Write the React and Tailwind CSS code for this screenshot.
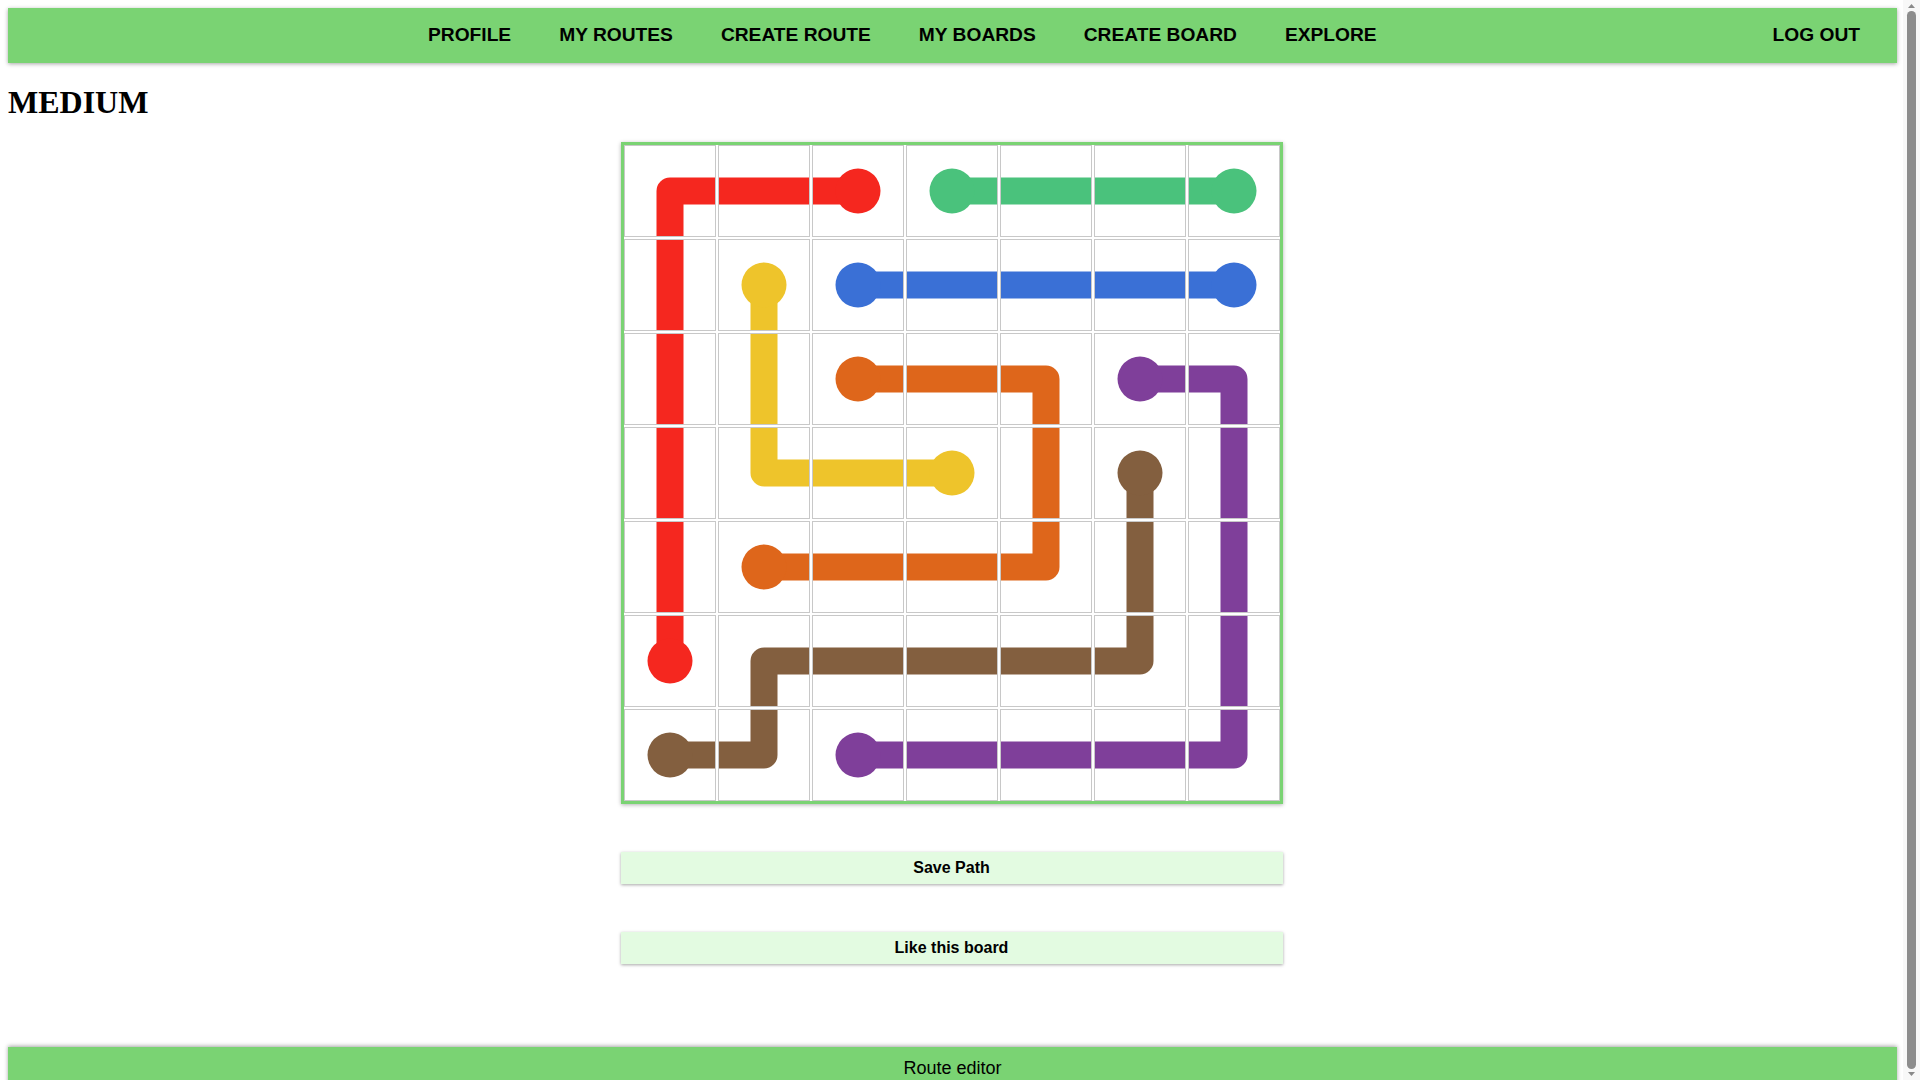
import { useState } from "react";

const COLORS = {
  r: "#f5271f",
  g: "#4ac27c",
  b: "#3a70d6",
  y: "#eec42b",
  o: "#de661b",
  p: "#7f3f9a",
  n: "#835f3f",
};

// each cell: [color, connections, isEndpoint]
// connections use U D L R
const BOARD = [
  [["r", "RD"], ["r", "LR"], ["r", "L", 1], ["g", "R", 1], ["g", "LR"], ["g", "LR"], ["g", "L", 1]],
  [["r", "UD"], ["y", "D", 1], ["b", "R", 1], ["b", "LR"], ["b", "LR"], ["b", "LR"], ["b", "L", 1]],
  [["r", "UD"], ["y", "UD"], ["o", "R", 1], ["o", "LR"], ["o", "LD"], ["p", "R", 1], ["p", "LD"]],
  [["r", "UD"], ["y", "UR"], ["y", "LR"], ["y", "L", 1], ["o", "UD"], ["n", "D", 1], ["p", "UD"]],
  [["r", "UD"], ["o", "R", 1], ["o", "LR"], ["o", "LR"], ["o", "UL"], ["n", "UD"], ["p", "UD"]],
  [["r", "U", 1], ["n", "RD"], ["n", "LR"], ["n", "LR"], ["n", "LR"], ["n", "LU"], ["p", "UD"]],
  [["n", "R", 1], ["n", "LU"], ["p", "R", 1], ["p", "LR"], ["p", "LR"], ["p", "LR"], ["p", "LU"]],
];

const EDGE = { U: [45, 0], D: [45, 90], L: [0, 45], R: [90, 45] };

function Cell({ cell }) {
  const [c, dirs, end] = cell;
  const color = COLORS[c];
  const pts =
    dirs.length === 1
      ? [EDGE[dirs[0]], [45, 45]]
      : [EDGE[dirs[0]], [45, 45], EDGE[dirs[1]]];
  return (
    <div className="relative border border-[#c8c8c8] bg-white">
      <svg viewBox="0 0 90 90" className="absolute inset-0 w-full h-full">
        <polyline
          points={pts.map((p) => p.join(",")).join(" ")}
          fill="none"
          stroke={color}
          strokeWidth="27"
          strokeLinejoin="round"
          strokeLinecap="butt"
        />
        {end ? <circle cx="45" cy="45" r="22.5" fill={color} /> : null}
      </svg>
    </div>
  );
}

function Scrollbar() {
  return (
    <div className="w-[17px] h-[1080px] shrink-0 bg-[#f8f8f8] flex flex-col items-center">
      <svg width="9" height="6" viewBox="0 0 9 6" className="mt-[3px]">
        <polygon points="4.5,1 8,5 1,5" fill="#8a8a8a" />
      </svg>
      <div className="mt-[2px] w-[9px] flex-1 rounded-[5px] bg-[#8d8d8d]" />
      <svg width="9" height="6" viewBox="0 0 9 6" className="mt-[2px] mb-[3px]">
        <polygon points="1,1 8,1 4.5,5" fill="#8a8a8a" />
      </svg>
    </div>
  );
}

export default function App() {
  const [liked, setLiked] = useState(false);
  const links = ["PROFILE", "MY ROUTES", "CREATE ROUTE", "MY BOARDS", "CREATE BOARD", "EXPLORE"];

  return (
    <div className="flex h-[1080px] overflow-hidden bg-white text-black font-['Liberation_Sans',Arial,sans-serif]">
      <div className="w-[1903px] shrink-0 p-2 pr-[6px]">
        {/* Top navigation */}
        <nav className="h-[55px] flex items-center bg-[#7ad373] shadow-[0_1px_4px_rgba(0,0,0,0.35)] pl-[420px] pr-[37px]">
          <div className="flex items-center gap-[48px]">
            {links.map((l) => (
              <a key={l} className="text-[19.2px] font-bold cursor-pointer">
                {l}
              </a>
            ))}
          </div>
          <a className="ml-auto text-[19.2px] font-bold cursor-pointer">LOG OUT</a>
        </nav>

        <h1 className="mt-[21px] mb-[21px] text-[32px] font-bold leading-[37px] font-['Liberation_Serif','Times_New_Roman',serif]">
          MEDIUM
        </h1>

        {/* Board */}
        <div className="flex flex-col items-center pr-[2px]">
          <div className="w-[662px] h-[662px] border-[3px] border-[#7ad373] shadow-[0_1px_4px_rgba(0,0,0,0.3)] grid grid-cols-7 grid-rows-7 gap-[2px] bg-white">
            {BOARD.flat().map((cell, i) => (
              <Cell key={i} cell={cell} />
            ))}
          </div>

          <button className="mt-[48px] w-[662px] h-[32px] bg-[#e3fbe1] text-[16px] font-bold shadow-[0_1px_3px_rgba(0,0,0,0.35)]">
            Save Path
          </button>
          <button
            onClick={() => setLiked(!liked)}
            className="mt-[48px] w-[662px] h-[32px] bg-[#e3fbe1] text-[16px] font-bold shadow-[0_1px_3px_rgba(0,0,0,0.35)]"
          >
            Like this board
          </button>
        </div>

        {/* Footer */}
        <footer className="mt-[83px] py-2 bg-[#7ad373] text-center text-[18px] shadow-[0_-1px_4px_rgba(0,0,0,0.35)]">
          Route editor
        </footer>
      </div>
      <Scrollbar />
    </div>
  );
}
